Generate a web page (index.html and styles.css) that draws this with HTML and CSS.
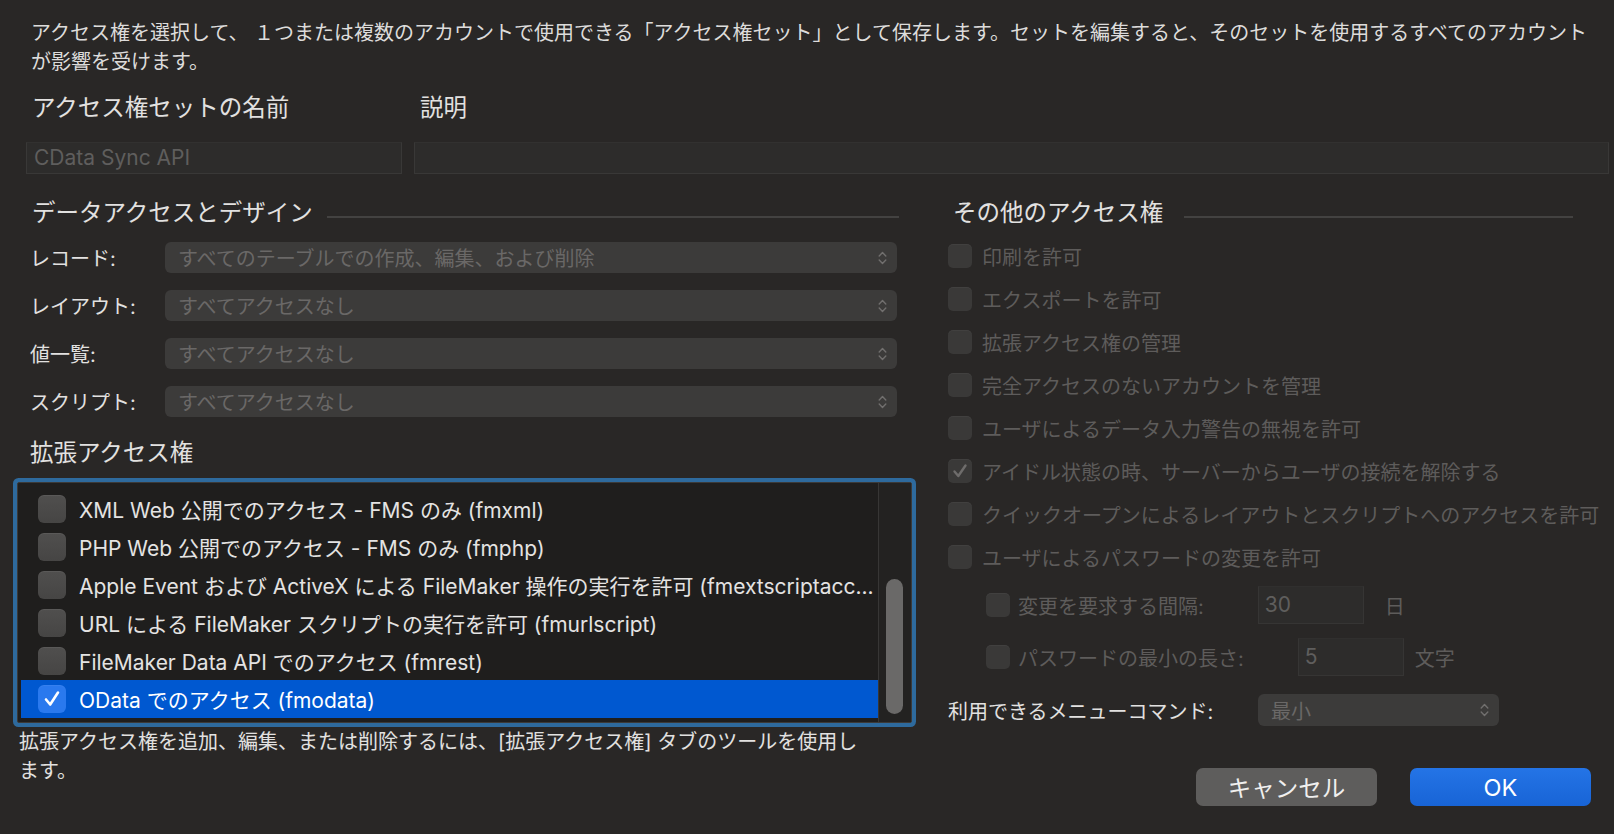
FILE: index.html
```html
<!DOCTYPE html>
<html lang="ja">
<head>
<meta charset="utf-8">
<title>アクセス権セットの編集</title>
<link rel="stylesheet" href="styles.css">
</head>
<body>
<div class="page">
  <p class="intro">アクセス権を選択して、 １つまたは複数のアカウントで使用できる「アクセス権セット」として保存します。セットを編集すると、そのセットを使用するすべてのアカウント<br>が影響を受けます。</p>

  <div class="name-grid">
    <div class="field-label">アクセス権セットの名前</div>
    <div class="field-label">説明</div>
    <div class="text-input">CData Sync API</div>
    <div class="text-input"></div>
  </div>

  <div class="main">
    <div class="col left">
      <div class="section-head"><span>データアクセスとデザイン</span><span class="rule"></span></div>
      <div class="popup-rows">
        <div class="popup-row"><span class="lbl">レコード:</span><div class="popup"><span>すべてのテーブルでの作成、編集、および削除</span><svg class="chev" width="9" height="16" viewBox="0 0 9 16"><path d="M1.2 6 L4.5 2.6 L7.8 6 M1.2 10 L4.5 13.4 L7.8 10" fill="none" stroke="currentColor" stroke-width="1.4" stroke-linecap="round" stroke-linejoin="round"/></svg></div></div>
        <div class="popup-row"><span class="lbl">レイアウト:</span><div class="popup"><span>すべてアクセスなし</span><svg class="chev" width="9" height="16" viewBox="0 0 9 16"><path d="M1.2 6 L4.5 2.6 L7.8 6 M1.2 10 L4.5 13.4 L7.8 10" fill="none" stroke="currentColor" stroke-width="1.4" stroke-linecap="round" stroke-linejoin="round"/></svg></div></div>
        <div class="popup-row"><span class="lbl">値一覧:</span><div class="popup"><span>すべてアクセスなし</span><svg class="chev" width="9" height="16" viewBox="0 0 9 16"><path d="M1.2 6 L4.5 2.6 L7.8 6 M1.2 10 L4.5 13.4 L7.8 10" fill="none" stroke="currentColor" stroke-width="1.4" stroke-linecap="round" stroke-linejoin="round"/></svg></div></div>
        <div class="popup-row"><span class="lbl">スクリプト:</span><div class="popup"><span>すべてアクセスなし</span><svg class="chev" width="9" height="16" viewBox="0 0 9 16"><path d="M1.2 6 L4.5 2.6 L7.8 6 M1.2 10 L4.5 13.4 L7.8 10" fill="none" stroke="currentColor" stroke-width="1.4" stroke-linecap="round" stroke-linejoin="round"/></svg></div></div>
      </div>

      <div class="sub-head">拡張アクセス権</div>
      <div class="list">
        <div class="rows">
          <div class="row"><span class="lcb"></span><span class="rtext">XML Web 公開でのアクセス - FMS のみ (fmxml)</span></div>
          <div class="row"><span class="lcb"></span><span class="rtext">PHP Web 公開でのアクセス - FMS のみ (fmphp)</span></div>
          <div class="row"><span class="lcb"></span><span class="rtext">Apple Event および ActiveX による FileMaker 操作の実行を許可 (fmextscriptacc...</span></div>
          <div class="row"><span class="lcb"></span><span class="rtext">URL による FileMaker スクリプトの実行を許可 (fmurlscript)</span></div>
          <div class="row"><span class="lcb"></span><span class="rtext">FileMaker Data API でのアクセス (fmrest)</span></div>
          <div class="row selected"><span class="lcb on"><svg width="22" height="22" viewBox="0 0 22 22"><path d="M5 11.5 L9.2 16.5 L17 4.5" fill="none" stroke="#ffffff" stroke-width="2.6" stroke-linecap="round" stroke-linejoin="round"/></svg></span><span class="rtext">OData でのアクセス (fmodata)</span></div>
        </div>
        <div class="scrollbar"><div class="thumb"></div></div>
      </div>
      <p class="note">拡張アクセス権を追加、編集、または削除するには、[拡張アクセス権] タブのツールを使用し<br>ます。</p>
    </div>

    <div class="col right">
      <div class="section-head"><span>その他のアクセス権</span><span class="rule"></span></div>
      <div class="opts">
        <div class="opt"><span class="cb"></span><span>印刷を許可</span></div>
        <div class="opt"><span class="cb"></span><span>エクスポートを許可</span></div>
        <div class="opt"><span class="cb"></span><span>拡張アクセス権の管理</span></div>
        <div class="opt"><span class="cb"></span><span>完全アクセスのないアカウントを管理</span></div>
        <div class="opt"><span class="cb"></span><span>ユーザによるデータ入力警告の無視を許可</span></div>
        <div class="opt"><span class="cb"><svg width="20" height="20" viewBox="0 0 20 20"><path d="M4.5 10.5 L8.3 15 L15.5 4.5" fill="none" stroke="#6e6c6b" stroke-width="2.4" stroke-linecap="round" stroke-linejoin="round"/></svg></span><span>アイドル状態の時、サーバーからユーザの接続を解除する</span></div>
        <div class="opt"><span class="cb"></span><span>クイックオープンによるレイアウトとスクリプトへのアクセスを許可</span></div>
        <div class="opt"><span class="cb"></span><span>ユーザによるパスワードの変更を許可</span></div>
      </div>
      <div class="sub sub1"><span class="cb"></span><span class="sub-lbl">変更を要求する間隔:</span><div class="num">30</div><span class="unit u1">日</span></div>
      <div class="sub sub2"><span class="cb"></span><span class="sub-lbl">パスワードの最小の長さ:</span><div class="num">5</div><span class="unit u2">文字</span></div>
      <div class="menu-row"><span class="menu-lbl">利用できるメニューコマンド:</span><div class="popup menu-pop"><span>最小</span><svg class="chev" width="9" height="16" viewBox="0 0 9 16"><path d="M1.2 6 L4.5 2.6 L7.8 6 M1.2 10 L4.5 13.4 L7.8 10" fill="none" stroke="currentColor" stroke-width="1.4" stroke-linecap="round" stroke-linejoin="round"/></svg></div></div>
      <div class="buttons"><button class="btn cancel">キャンセル</button><button class="btn ok">OK</button></div>
    </div>
  </div>
</div>
</body>
</html>
```

FILE: styles.css
```css
* { box-sizing: border-box; }

body {
  margin: 0;
  width: 1614px;
  height: 834px;
  overflow: hidden;
  background: #292726;
  color: #e2e1e0;
  font-family: "Inter", "Noto Sans CJK JP", sans-serif;
  font-size: 20px;
}

.page { padding-top: 19px; }

.intro {
  margin: 0;
  padding-left: 31px;
  line-height: 29px;
  white-space: nowrap;
  color: #dddcdb;
}

.name-grid {
  display: grid;
  grid-template-columns: 376px 1195px;
  column-gap: 12px;
  row-gap: 19px;
  margin: 16px 0 0 26px;
}

.field-label {
  font-size: 23.5px;
  line-height: 30px;
  padding-left: 6px;
  color: #e2e1e0;
}

.text-input {
  height: 32px;
  background: #2d2c2b;
  border: 1px solid #393837;
  border-top-color: #323130;
  padding: 0 7px;
  line-height: 30px;
  font-size: 21px;
  color: #5f5e5d;
}

.main {
  display: grid;
  grid-template-columns: 895px 660px;
  column-gap: 36px;
  margin: 24px 0 0 17px;
}

.col { display: flex; flex-direction: column; }

.section-head {
  display: flex;
  align-items: center;
  font-size: 23.5px;
  line-height: 30px;
  white-space: nowrap;
}
.section-head .rule {
  flex: 1;
  height: 2px;
  margin-top: 8px;
  background: #434241;
}
.left .section-head { padding-left: 15px; }
.left .section-head .rule { margin-left: 14px; margin-right: 13px; }
.right .section-head { padding-left: 5px; }
.right .section-head .rule { margin-left: 21px; margin-right: 35px; }

.popup-rows {
  display: flex;
  flex-direction: column;
  gap: 17px;
  margin-top: 14px;
  padding: 0 15px 0 13px;
}
.popup-row { display: flex; align-items: center; height: 31px; }
.popup-row .lbl { width: 135px; white-space: nowrap; }

.popup {
  flex: 1;
  height: 31px;
  border-radius: 6px;
  background: #3c3b3a;
  display: flex;
  align-items: center;
  justify-content: space-between;
  padding: 0 10px 0 13px;
  color: #6a6867;
  white-space: nowrap;
}
.chev { color: #716f6e; flex: none; }

.sub-head {
  margin-top: 21px;
  padding-left: 13px;
  font-size: 23.5px;
  line-height: 30px;
}

.list {
  margin-top: 14px;
  height: 241px;
  border: 1px solid #3b3a39;
  border-radius: 2px;
  box-shadow: 0 0 0 4px #2e6a9d;
  background: #1f1e1d;
  display: flex;
  padding-left: 3px;
}
.rows {
  flex: 1;
  min-width: 0;
  padding-top: 7px;
  display: flex;
  flex-direction: column;
}
.row {
  height: 38px;
  display: flex;
  align-items: center;
  gap: 13px;
  padding-left: 17px;
  font-size: 21px;
  color: #e4e3e2;
}
.rtext {
  white-space: nowrap;
  overflow: hidden;
  text-overflow: ellipsis;
  min-width: 0;
}
.row.selected { background: #0058d0; color: #ffffff; }

.lcb {
  flex: none;
  width: 28px;
  height: 28px;
  border-radius: 6px;
  background: linear-gradient(#504f4e, #464544);
  box-shadow: inset 0 1px 0 rgba(255,255,255,0.06);
  display: flex;
  align-items: center;
  justify-content: center;
}
.lcb.on { background: #2a79ee; }

.scrollbar {
  width: 33px;
  flex: none;
  background: #232221;
  border-left: 1px solid #373635;
  padding: 96px 0 0 7px;
}
.thumb {
  width: 17px;
  height: 135px;
  border-radius: 9px;
  background: #6a6968;
}

.note {
  margin: 5px 0 0 2px;
  line-height: 29px;
  white-space: nowrap;
  color: #e2e1e0;
}

.opts {
  display: flex;
  flex-direction: column;
  gap: 19px;
  margin-top: 16px;
}
.opt {
  display: flex;
  align-items: center;
  gap: 10px;
  height: 24px;
  color: #5e5c5b;
  white-space: nowrap;
}
.cb {
  flex: none;
  width: 24px;
  height: 24px;
  border-radius: 5px;
  background: #3a3938;
  box-shadow: inset 0 1px 0 rgba(255,255,255,0.04);
  display: flex;
  align-items: center;
  justify-content: center;
}

.sub {
  display: flex;
  align-items: center;
  height: 38px;
  padding-left: 38px;
  color: #5e5c5b;
  white-space: nowrap;
}
.sub .cb { margin-right: 8px; }
.sub1 { margin-top: 17px; }
.sub2 { margin-top: 14px; }
.num {
  margin-left: 54px;
  width: 106px;
  height: 38px;
  background: #2d2c2b;
  border: 1px solid #363534;
  border-top-color: #302f2e;
  padding-left: 6px;
  line-height: 36px;
  font-size: 21px;
  color: #5f5e5d;
}
.u1 { margin-left: 21px; }
.u2 { margin-left: 11px; }

.menu-row {
  display: flex;
  align-items: center;
  height: 32px;
  margin-top: 18px;
}
.menu-lbl { width: 310px; white-space: nowrap; color: #e2e1e0; }
.menu-pop { flex: none; width: 241px; height: 32px; }

.buttons {
  display: flex;
  justify-content: flex-end;
  gap: 33px;
  margin-top: 42px;
  padding-right: 17px;
}
.btn {
  width: 181px;
  height: 38px;
  border: none;
  border-radius: 7px;
  font-family: "Inter", "Noto Sans CJK JP", sans-serif;
  font-size: 23.5px;
  color: #f0efee;
  padding: 0;
}
.btn.cancel { background: #5e5d5c; }
.btn.ok { background: linear-gradient(#2474e6, #1864d6); color: #ffffff; }
```
